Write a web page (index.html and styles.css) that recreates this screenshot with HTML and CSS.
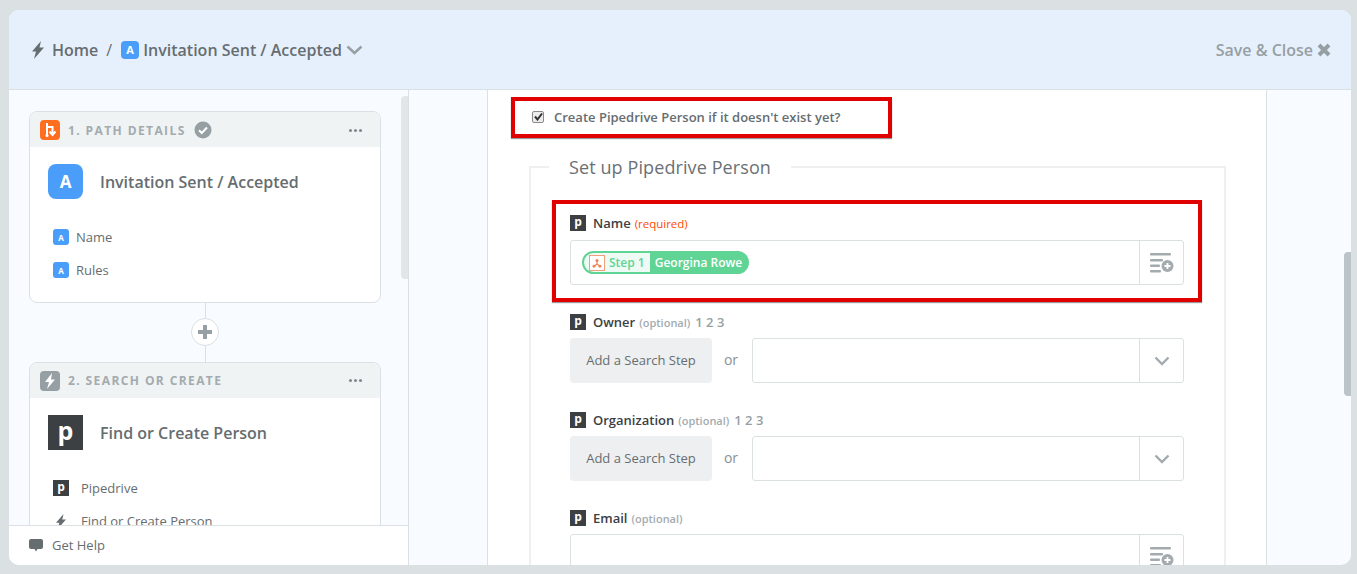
FILE: index.html
```html
<!DOCTYPE html>
<html lang="en">
<head>
    <meta charset="UTF-8">
    <meta name="viewport" content="width=device-width, initial-scale=1.0">
    <title>Invitation Sent / Accepted</title>
    <link rel="stylesheet" href="styles.css">
</head>
<body>
    <div class="app">
        <header class="topbar">
            <div class="crumbs">
                <svg class="crumb-bolt" width="14" height="18" viewBox="0 0 14 18"><path d="M10 0 1 10.500h4L3 18l10-11.500H8.500z" fill="#666d70"/></svg>
                <span class="crumb-home">Home</span>
                <span class="crumb-sep">/</span>
                <span class="app-a app-a-md">A</span>
                <span class="crumb-title">Invitation Sent / Accepted</span>
                <svg class="crumb-chev" width="17" height="10" viewBox="0 0 17 10"><path d="M1.500 1.500 8.500 8l7-6.500" fill="none" stroke="#969fa3" stroke-width="2.400"/></svg>
            </div>
            <div class="save-close">
                <span>Save &amp; Close</span>
                <svg width="14" height="14" viewBox="0 0 14 14"><path d="M2 2l10 10M12 2 2 12" stroke="#969fa3" stroke-width="4"/></svg>
            </div>
        </header>

        <div class="workspace">
            <aside class="sidebar">
                <div class="sidebar-scroll">
                    <div class="steps">
                        <section class="card">
                            <div class="card-head">
                                <span class="badge badge-orange">
                                    <svg width="14" height="16" viewBox="0 0 14 16"><path d="M4 1v12M4 5h5.500v6M6.500 9.500l3 3.500 3-3.500" fill="none" stroke="#fff" stroke-width="2"/><circle cx="4" cy="13.500" r="1.500" fill="#fff"/></svg>
                                </span>
                                <span class="card-step">1. PATH DETAILS</span>
                                <svg class="card-check" width="18" height="18" viewBox="0 0 18 18"><circle cx="9" cy="9" r="8.500" fill="#969fa3"/><path d="M5 9.200l2.800 2.800L13 6.500" fill="none" stroke="#fff" stroke-width="2"/></svg>
                                <span class="dots"><i></i><i></i><i></i></span>
                            </div>
                            <div class="card-main">
                                <span class="app-a app-a-lg">A</span>
                                <span class="card-title">Invitation Sent / Accepted</span>
                            </div>
                            <ul class="card-list card-list-a">
                                <li><span class="app-a app-a-sm">A</span>Name</li>
                                <li><span class="app-a app-a-sm">A</span>Rules</li>
                            </ul>
                        </section>

                        <div class="connector">
                            <span class="add-step">
                                <svg width="14" height="14" viewBox="0 0 14 14"><path d="M7 0v14M0 7h14" stroke="#969fa3" stroke-width="4"/></svg>
                            </span>
                        </div>

                        <section class="card">
                            <div class="card-head">
                                <span class="badge badge-grey">
                                    <svg width="12" height="16" viewBox="0 0 12 16"><path d="M8 0 1 9h4l-2 7 8-9.500H7z" fill="#fff"/></svg>
                                </span>
                                <span class="card-step">2. SEARCH OR CREATE</span>
                                <span class="dots"><i></i><i></i><i></i></span>
                            </div>
                            <div class="card-main">
                                <span class="pd pd-lg">p</span>
                                <span class="card-title">Find or Create Person</span>
                            </div>
                            <ul class="card-list">
                                <li><span class="pd pd-sm">p</span>Pipedrive</li>
                                <li>
                                    <span class="list-bolt"><svg width="12" height="15" viewBox="0 0 14 18"><path d="M10 0 1 10.500h4L3 18l10-11.500H8.500z" fill="#666d70"/></svg></span>
                                    Find or Create Person
                                </li>
                            </ul>
                        </section>
                    </div>
                </div>
                <div class="sidebar-thumb"></div>
                <footer class="help">
                    <svg width="14" height="14" viewBox="0 0 14 14"><path d="M2 1h10a2 2 0 0 1 2 2v6a2 2 0 0 1-2 2H8.500L7 13.500 5.500 11H2a2 2 0 0 1-2-2V3a2 2 0 0 1 2-2z" fill="#666d70"/></svg>
                    <span>Get Help</span>
                </footer>
            </aside>

            <main class="canvas">
                <div class="sheet">
                    <label class="mark mark-check">
                        <span class="check-box">
                            <svg width="9" height="9" viewBox="0 0 9 9"><path d="M1 4.500l2.500 3L8 1.500" fill="none" stroke="#333" stroke-width="2"/></svg>
                        </span>
                        Create Pipedrive Person if it doesn't exist yet?
                    </label>

                    <fieldset class="person-set">
                        <legend>Set up Pipedrive Person</legend>

                        <div class="mark mark-field">
                            <div class="field-label"><span class="pd pd-sm">p</span><b>Name</b> <span class="req">(required)</span></div>
                            <div class="input-row">
                                <div class="input-box">
                                    <span class="pill">
                                        <span class="pill-step">
                                            <span class="pill-icon">
                                                <svg width="12" height="12" viewBox="0 0 14 14"><path d="M7 4v4M7 8 3.500 11M7 8l3.500 3" fill="none" stroke="#ef8354" stroke-width="1.400"/><circle cx="7" cy="4" r="1.800" fill="#ef8354"/><circle cx="3.500" cy="10.800" r="1.700" fill="#ef8354"/><circle cx="10.500" cy="10.800" r="1.700" fill="#ef8354"/></svg>
                                            </span>
                                            Step 1
                                        </span>
                                        <span class="pill-value">Georgina Rowe</span>
                                    </span>
                                </div>
                                <span class="input-btn">
                                    <svg width="24" height="20" viewBox="0 0 24 20"><g fill="#a3abaf"><rect y="0" width="21" height="2.400" rx="1"/><rect y="6" width="13" height="2.400" rx="1"/><rect y="11.500" width="10" height="2.400" rx="1"/><rect y="17" width="11" height="2.400" rx="1"/><circle cx="17.500" cy="13" r="6"/></g><path d="M17.500 10v6M14.500 13h6" stroke="#fff" stroke-width="1.800"/></svg>
                                </span>
                            </div>
                        </div>

                        <div class="field field-owner">
                            <div class="field-label"><span class="pd pd-sm">p</span><b>Owner</b> <span class="opt">(optional)</span> <span class="nums">1 2 3</span></div>
                            <div class="search-row">
                                <button class="search-btn" type="button">Add a Search Step</button>
                                <span class="or">or</span>
                                <div class="input-row">
                                    <div class="input-box"></div>
                                    <span class="input-btn">
                                        <svg width="16" height="10" viewBox="0 0 16 10"><path d="M1.500 1.500 8 8l6.500-6.500" fill="none" stroke="#a3abaf" stroke-width="2.400"/></svg>
                                    </span>
                                </div>
                            </div>
                        </div>

                        <div class="field">
                            <div class="field-label"><span class="pd pd-sm">p</span><b>Organization</b> <span class="opt">(optional)</span> <span class="nums">1 2 3</span></div>
                            <div class="search-row">
                                <button class="search-btn" type="button">Add a Search Step</button>
                                <span class="or">or</span>
                                <div class="input-row">
                                    <div class="input-box"></div>
                                    <span class="input-btn">
                                        <svg width="16" height="10" viewBox="0 0 16 10"><path d="M1.500 1.500 8 8l6.500-6.500" fill="none" stroke="#a3abaf" stroke-width="2.400"/></svg>
                                    </span>
                                </div>
                            </div>
                        </div>

                        <div class="field">
                            <div class="field-label"><span class="pd pd-sm">p</span><b>Email</b> <span class="opt">(optional)</span></div>
                            <div class="input-row">
                                <div class="input-box"></div>
                                <span class="input-btn">
                                    <svg width="24" height="20" viewBox="0 0 24 20"><g fill="#a3abaf"><rect y="0" width="21" height="2.400" rx="1"/><rect y="6" width="13" height="2.400" rx="1"/><rect y="11.500" width="10" height="2.400" rx="1"/><rect y="17" width="11" height="2.400" rx="1"/><circle cx="17.500" cy="13" r="6"/></g><path d="M17.500 10v6M14.500 13h6" stroke="#fff" stroke-width="1.800"/></svg>
                                </span>
                            </div>
                        </div>
                    </fieldset>
                </div>
                <div class="canvas-thumb"></div>
            </main>
        </div>
    </div>
</body>
</html>
```

FILE: styles.css
```css
* {
    box-sizing: border-box;
}
html, body {
    height: 100%;
}
body {
    margin: 0;
    padding: 10px 6px 9px 9px;
    background: #dbe0e2;
    font-family: "Open Sans", sans-serif;
    color: #666d70;
    overflow: hidden;
}
.app {
    display: flex;
    flex-direction: column;
    height: 555px;
    border-radius: 10px;
    overflow: hidden;
    background: #f8fbff;
}
.topbar {
    flex: 0 0 80px;
    display: flex;
    align-items: center;
    justify-content: space-between;
    padding: 0 20px 0 22px;
    background: #e6f0fd;
    border-bottom: 1px solid #dbe0e2;
}
.crumbs {
    display: flex;
    align-items: center;
    font-size: 16px;
    font-weight: 600;
}
.crumb-bolt {
    margin-right: 7px;
}
.crumb-sep {
    margin: 0 9px 0 8px;
    font-weight: 400;
}
.crumb-title {
    margin-left: 4px;
}
.crumb-chev {
    margin-left: 4px;
}
.save-close {
    display: flex;
    align-items: center;
    gap: 4px;
    font-size: 16px;
    font-weight: 600;
    color: #969fa3;
}

.app-a {
    display: inline-flex;
    align-items: center;
    justify-content: center;
    background: #4a9df8;
    color: #fff;
    font-weight: 700;
}
.app-a-md {
    width: 18px;
    height: 18px;
    border-radius: 4px;
    font-size: 11px;
}
.app-a-lg {
    width: 35px;
    height: 35px;
    border-radius: 8px;
    font-size: 17px;
}
.app-a-sm {
    width: 16px;
    height: 16px;
    border-radius: 3px;
    font-size: 8px;
    margin-right: 7px;
}
.pd {
    display: inline-flex;
    align-items: center;
    justify-content: center;
    background: #3c4043;
    color: #fff;
    font-weight: 700;
}
.pd-lg {
    width: 35px;
    height: 35px;
    font-size: 25px;
    line-height: 1;
    padding-bottom: 4px;
}
.pd-sm {
    width: 16px;
    height: 16px;
    font-size: 12px;
    line-height: 1;
    padding-bottom: 2px;
}

.workspace {
    flex: 1;
    display: flex;
    min-height: 0;
}
.sidebar {
    position: relative;
    flex: 0 0 400px;
    display: flex;
    flex-direction: column;
    border-right: 1px solid #dbe0e2;
    min-height: 0;
}
.sidebar-scroll {
    flex: 1;
    overflow: hidden;
    padding: 21px 27px 0 20px;
}
.sidebar-thumb {
    position: absolute;
    top: 6px;
    right: 0;
    width: 7px;
    height: 183px;
    border-radius: 4px 0 0 4px;
    background: #e3e6e8;
}
.help {
    flex: 0 0 40px;
    display: flex;
    align-items: center;
    gap: 9px;
    padding: 0 0 2px 20px;
    background: #fff;
    border-top: 1px solid #dbe0e2;
    font-size: 13px;
}

.card {
    border: 1px solid #dbe0e2;
    border-radius: 8px;
    background: #fff;
    overflow: hidden;
}
.card:first-child {
    height: 192px;
}
.card:first-child .card-head {
    padding-top: 1px;
}
.card-head {
    display: flex;
    align-items: center;
    height: 35px;
    padding: 0 18px 0 10px;
    background: #f0f3f4;
}
.badge {
    display: inline-flex;
    align-items: center;
    justify-content: center;
    width: 20px;
    height: 20px;
    border-radius: 4px;
    margin-right: 8px;
}
.badge-orange {
    background: #ff6d1f;
}
.badge-grey {
    background: #969fa3;
}
.card-step {
    font-size: 12px;
    font-weight: 700;
    letter-spacing: 1.4px;
    color: #a3abaf;
}
.card-check {
    margin-left: 8px;
}
.dots {
    display: flex;
    gap: 2px;
    margin-left: auto;
}
.dots i {
    width: 3px;
    height: 3px;
    border-radius: 50%;
    background: #7f878b;
}
.card-main {
    display: flex;
    align-items: center;
    gap: 17px;
    padding: 17px 18px 0;
    font-size: 16px;
    font-weight: 600;
}
.card-list {
    list-style: none;
    margin: 0;
    padding: 30px 23px 0;
    font-size: 13px;
}
.card-list li {
    display: flex;
    align-items: center;
    height: 16px;
    margin-bottom: 17px;
}
.card-list .pd-sm {
    margin-right: 12px;
}
.list-bolt {
    display: inline-flex;
    justify-content: center;
    width: 16px;
    margin-right: 12px;
}
.connector {
    display: flex;
    align-items: center;
    justify-content: center;
    height: 59px;
    padding-bottom: 1px;
    background: linear-gradient(#dbe0e2, #dbe0e2) center / 1px 100% no-repeat;
}
.add-step {
    display: flex;
    align-items: center;
    justify-content: center;
    width: 28px;
    height: 28px;
    border: 1px solid #dbe0e2;
    border-radius: 50%;
    background: #fff;
}

.canvas {
    position: relative;
    flex: 1;
    min-width: 0;
    padding-left: 78px;
    overflow: hidden;
}
.sheet {
    width: 780px;
    height: 100%;
    padding: 7px 40px 0 23px;
    background: #fff;
    border-left: 1px solid #dbe0e2;
    border-right: 1px solid #dbe0e2;
    overflow: hidden;
}
.canvas-thumb {
    position: absolute;
    top: 162px;
    right: 0;
    width: 7px;
    height: 144px;
    border-radius: 4px 0 0 4px;
    background: #bcc4ca;
}
.mark {
    display: block;
    border: 4px solid #e00000;
    box-shadow: 0 1px 1px rgba(0, 0, 0, 0.4);
}
.mark-check {
    display: flex;
    align-items: center;
    width: 381px;
    height: 41px;
    padding: 0 0 2px 17px;
    font-size: 13px;
    font-weight: 600;
}
.check-box {
    display: inline-flex;
    align-items: center;
    justify-content: center;
    width: 12px;
    height: 12px;
    margin-right: 10px;
    border: 1px solid #8a8a8a;
    border-radius: 2px;
    background: #ececec;
}
.person-set {
    width: 697px;
    margin: 17px 0 0 18px;
    padding: 22px 0 0 22px;
    border: 2px solid #eeeff0;
    border-bottom: 0;
}
.person-set legend {
    margin-left: -4px;
    padding: 0 20px;
    font-size: 18px;
    letter-spacing: 0.1px;
    color: #6a7175;
}
.mark-field {
    width: 650px;
    height: 102px;
    margin: -1px 0 0 -1px;
    padding: 11px 0 0 14px;
}
.field-label {
    display: flex;
    align-items: center;
    gap: 4px;
    height: 16px;
    font-size: 13px;
    color: #8a9195;
}
.field-label b {
    margin-left: 3px;
    font-weight: 600;
    color: #3c4043;
}
.req {
    font-size: 11.5px;
    color: #ff4a00;
}
.opt {
    font-size: 11px;
    font-weight: 600;
    color: #a3abaf;
}
.nums {
    margin-left: 1px;
    font-size: 13px;
    font-weight: 600;
    color: #969fa3;
}
.input-row {
    flex: 1;
    display: flex;
    height: 45px;
    margin-top: 9px;
    border: 1px solid #dbe0e2;
    border-radius: 3px;
    background: #fff;
}
.mark-field .input-row {
    width: 614px;
}
.input-box {
    flex: 1;
    display: flex;
    align-items: center;
    padding-left: 11px;
}
.input-btn {
    flex: 0 0 44px;
    display: flex;
    align-items: center;
    justify-content: center;
    border-left: 1px solid #dbe0e2;
}
.pill {
    display: inline-flex;
    height: 23px;
    border: 2px solid #5fd495;
    border-radius: 12px;
    background: #5fd495;
    font-size: 12px;
    font-weight: 600;
    overflow: hidden;
}
.pill-step {
    display: flex;
    align-items: center;
    gap: 4px;
    padding: 0 5px;
    background: #eefaf4;
    color: #5fd495;
}
.pill-icon {
    display: inline-flex;
    align-items: center;
    justify-content: center;
    width: 16px;
    height: 16px;
    border: 1px solid #f2a07c;
    background: #fff;
}
.pill-value {
    display: flex;
    align-items: center;
    padding: 0 5px;
    color: #fff;
}
.field {
    width: 614px;
    margin: 0 0 29px 17px;
}
.field-owner {
    margin-top: 12px;
}
.search-row {
    display: flex;
    align-items: flex-start;
}
.search-btn {
    width: 142px;
    height: 45px;
    margin-top: 8px;
    padding-bottom: 3px;
    border: none;
    border-radius: 4px;
    background: #eeeff0;
    color: #666d70;
    font-family: inherit;
    font-size: 13px;
}
.or {
    width: 38px;
    margin: 7px 2px 0 0;
    font-size: 14px;
    line-height: 45px;
    text-align: center;
    color: #8a9195;
}
.search-row .input-row {
    margin-top: 8px;
}
.field > .input-row {
    margin-top: 8px;
}
```
